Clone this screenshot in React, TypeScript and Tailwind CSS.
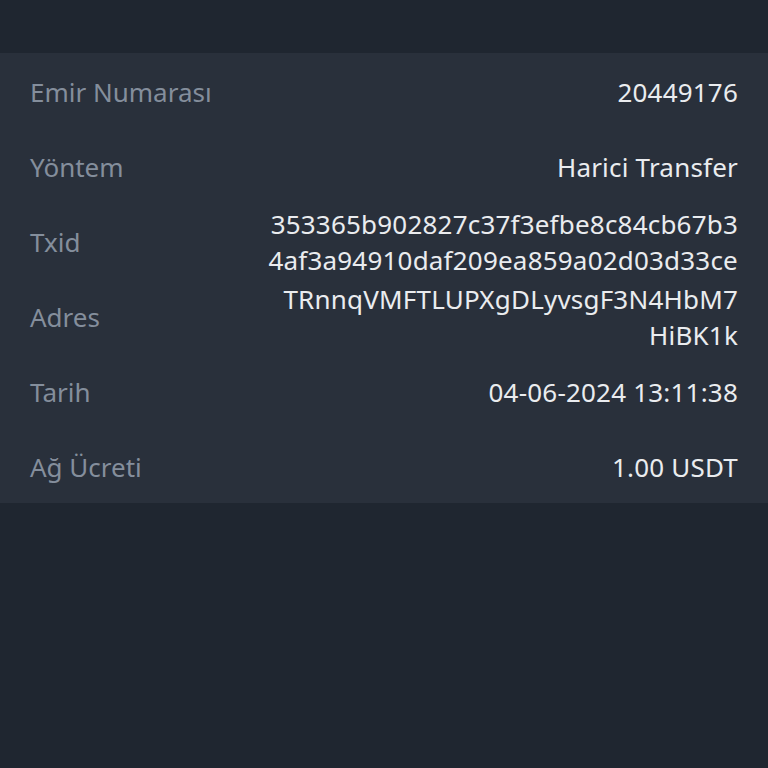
const rows: { label: string; value: string[] }[] = [
  { label: "Emir Numarası", value: ["20449176"] },
  { label: "Yöntem", value: ["Harici Transfer"] },
  { label: "Txid", value: ["353365b902827c37f3efbe8c84cb67b3", "4af3a94910daf209ea859a02d03d33ce"] },
  { label: "Adres", value: ["TRnnqVMFTLUPXgDLyvsgF3N4HbM7", "HiBK1k"] },
  { label: "Tarih", value: ["04-06-2024 13:11:38"] },
  { label: "Ağ Ücreti", value: ["1.00 USDT"] },
];

export default function App() {
  return (
    <div
      className="w-[768px] h-[768px] bg-[#1f2630] pt-[53px]"
      style={{ fontFamily: '"Noto Sans", sans-serif' }}
    >
      <div className="bg-[#29303b] px-[30px]">
        {rows.map((r) => (
          <div key={r.label} className="h-[75px] pt-[3px] flex items-center justify-between">
            <span className="text-[26px] leading-[36px] text-[#848e9c]">{r.label}</span>
            <div className="text-right text-[26px] leading-[36px] text-[#eaecef] tracking-[0.2px]">
              {r.value.map((v) => (
                <div key={v}>{v}</div>
              ))}
            </div>
          </div>
        ))}
      </div>
    </div>
  );
}
